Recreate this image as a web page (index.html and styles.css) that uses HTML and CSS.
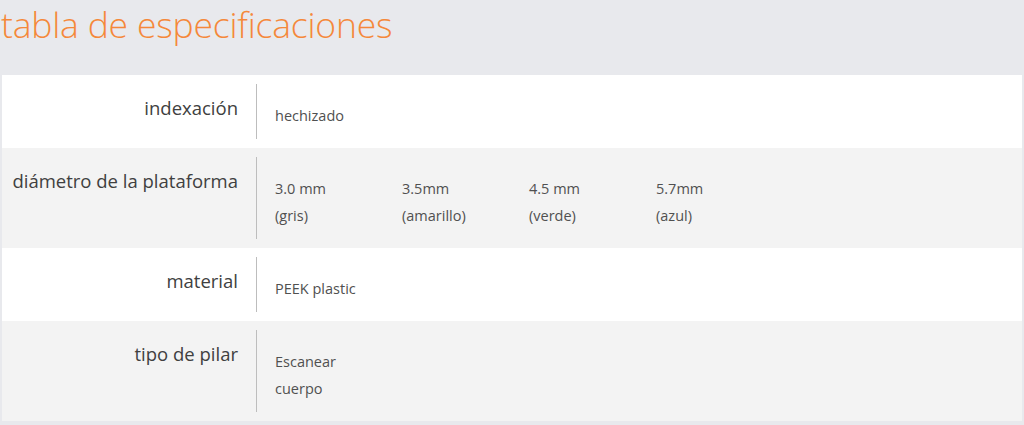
FILE: index.html
```html
<!DOCTYPE html>
<html lang="es">
<head>
<meta charset="utf-8">
<title>tabla de especificaciones</title>
<link rel="stylesheet" href="styles.css">
</head>
<body>
<h1 class="title">tabla de especificaciones</h1>
<div class="spec">
  <div class="row">
    <div class="label">indexación</div>
    <div class="value"><div class="item">hechizado</div></div>
  </div>
  <div class="row alt">
    <div class="label">diámetro de la plataforma</div>
    <div class="value">
      <div class="item">3.0 mm<br>(gris)</div>
      <div class="item">3.5mm<br>(amarillo)</div>
      <div class="item">4.5 mm<br>(verde)</div>
      <div class="item">5.7mm<br>(azul)</div>
    </div>
  </div>
  <div class="row">
    <div class="label">material</div>
    <div class="value"><div class="item">PEEK plastic</div></div>
  </div>
  <div class="row alt">
    <div class="label">tipo de pilar</div>
    <div class="value"><div class="item">Escanear<br>cuerpo</div></div>
  </div>
</div>
</body>
</html>
```
FILE: styles.css
```css
html, body {
  margin: 0;
  padding: 0;
}
body {
  background: #e8e9ed;
  font-family: "Open Sans", "Noto Sans", sans-serif;
  width: 1024px;
  height: 425px;
  overflow: hidden;
}
.title {
  margin: 0;
  padding: 2px 0 0 1px;
  height: 75px;
  box-sizing: border-box;
  font-size: 35.5px;
  font-weight: 300;
  line-height: 44px;
  color: #f5883a;
  letter-spacing: -0.2px;
}
.spec {
  margin: 0 2px;
  background: #fff;
}
.row {
  display: grid;
  grid-template-columns: 254px 1fr;
  padding: 9px 0;
  background: #fff;
}
.row.alt {
  background: #f3f3f3;
}
.label {
  text-align: right;
  padding: 10px 18px 0 0;
  font-size: 18.5px;
  line-height: 27px;
  color: #404040;
}
.value {
  border-left: 1px solid #bdbdbd;
  padding: 18px 0 10px 18px;
  display: flex;
  font-size: 14.5px;
  line-height: 27px;
  color: #505050;
}
.item {
  width: 127px;
}
```
